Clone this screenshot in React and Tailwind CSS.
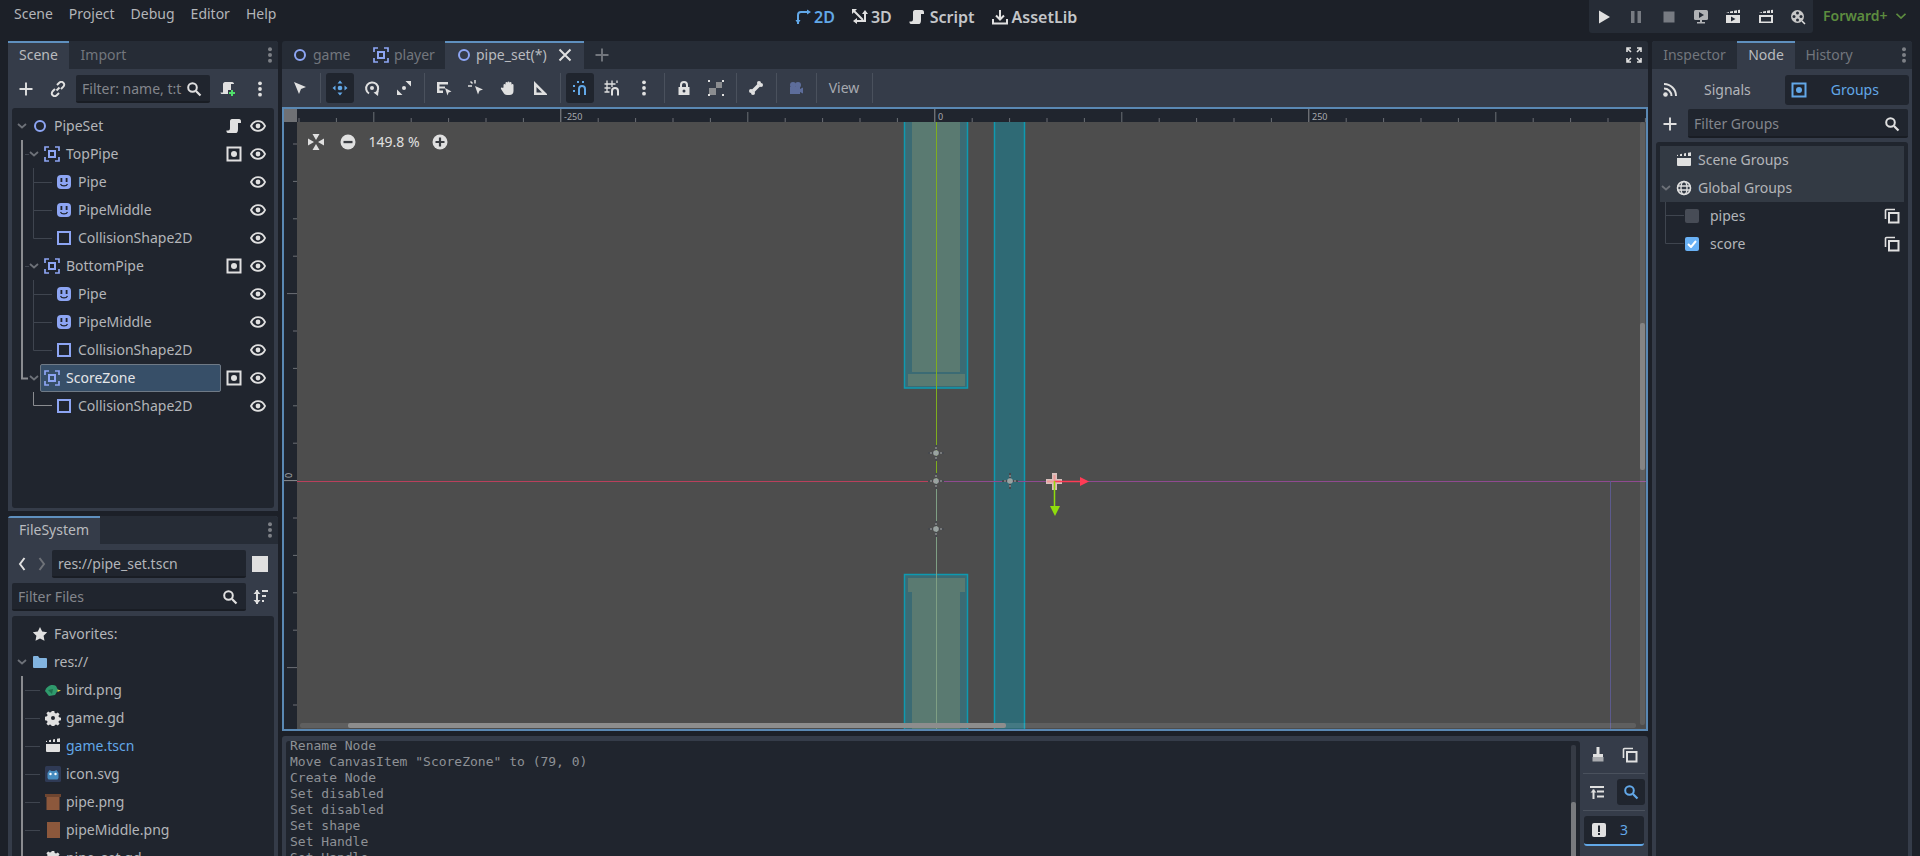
import React from "react";

const W = "#e0e0e0";
const B = "#8da5f3";
const Ic = ({ c = W, s = 16, children, className = "" }) => (
  <svg width={s} height={s} viewBox="0 0 16 16" fill="none" stroke="none" className={"shrink-0 " + className} style={{ color: c }}>{children}</svg>
);
const NodeI = () => <Ic><circle cx="8" cy="8" r="5" stroke={B} strokeWidth="2" /></Ic>;
const Node2 = () => <Ic><path d="M1 5V1h4M11 1h4v4M15 11v4h-4M5 15H1v-4" stroke={B} strokeWidth="1.7" /><rect x="5" y="5" width="6" height="6" stroke={B} strokeWidth="2" /></Ic>;
const Sprite = () => <Ic><path d="M5 1h6a4 4 0 0 1 4 4v6a4 4 0 0 1-4 4H5a4 4 0 0 1-4-4V5a4 4 0 0 1 4-4z" fill={B} /><rect x="4.500" y="4" width="1.800" height="4" fill="#20252e" /><rect x="9.700" y="4" width="1.800" height="4" fill="#20252e" /><path d="M4.500 10c1 2.500 6 2.500 7 0" stroke="#20252e" strokeWidth="1.200" /></Ic>;
const Coll = () => <Ic><rect x="2" y="2" width="12" height="12" stroke={B} strokeWidth="2" /></Ic>;
const Eye = () => <Ic><path d="M1 8c3-6.500 11-6.500 14 0-3 6.500-11 6.500-14 0z" stroke={W} strokeWidth="1.800" /><circle cx="8" cy="8" r="2.400" fill={W} /></Ic>;
const Group = ({ c = W }) => <Ic><rect x="1.500" y="1.500" width="13" height="13" stroke={c} strokeWidth="2" /><circle cx="8" cy="8" r="3" fill={c} /></Ic>;
const ScriptI = ({ c = W }) => <Ic c={c}><path d="M6 1h7c1.500 0 2 1 2 2.500V5h-3v6c0 2-.5 4-2 4H2c-1.200 0-1.600-1-1.600-2.400h1.600C4 12.600 4 11 4 9V3.500C4 2 4.700 1 6 1z" fill={c} /></Ic>;
const Search = ({ c = W }) => <Ic c={c}><circle cx="6.500" cy="6.500" r="4.300" stroke={c} strokeWidth="2" /><path d="M10 10l4.500 4.500" stroke={c} strokeWidth="2.200" /></Ic>;
const Chevron = ({ c = "#6d7178" }) => <svg width="10" height="6" viewBox="0 0 10 6" fill="none" className="shrink-0"><path d="M1 1l4 3.500L9 1" stroke={c} strokeWidth="1.800" /></svg>;
const Plus = ({ c = W }) => <Ic c={c}><path d="M8 1.500v13M1.500 8h13" stroke={c} strokeWidth="1.900" /></Ic>;
const Dots = ({ c = W }) => <svg width="4" height="16" viewBox="0 0 4 16" className="shrink-0"><circle cx="2" cy="2.300" r="1.900" fill={c} /><circle cx="2" cy="8" r="1.900" fill={c} /><circle cx="2" cy="13.700" r="1.900" fill={c} /></svg>;
const DockDots = () => <svg width="4" height="16" viewBox="0 0 4 16" className="shrink-0"><circle cx="2" cy="2.300" r="2" fill="#7d8086" /><circle cx="2" cy="8" r="2" fill="#7d8086" /><circle cx="2" cy="13.700" r="2" fill="#7d8086" /></svg>;
const Clap = ({ c = W }) => <Ic c={c}><path d="M1 6h14v7a1 1 0 0 1-1 1H2a1 1 0 0 1-1-1z" fill={c} /><path d="M1 4V3l1-.3v1.300zM4 4V2.200L6 1.800V4zM8 4V1.400l2-.4v3zM12 4V.8l3-.5V4z" fill={c} /></Ic>;
const Copy = () => <Ic><path d="M1.500 11V2.500a1 1 0 0 1 1-1H11" stroke={W} strokeWidth="1.600" /><rect x="5" y="5" width="9.500" height="9.500" stroke={W} strokeWidth="2" /></Ic>;

const TreeRow = ({ pl, chevron, icon, label, right, selected }) => (
  <div className="relative flex h-7 items-center">
    {selected && <div className="absolute left-7 top-0 h-7 w-[181px] rounded-[2px] border border-[#6f7a86] bg-[#374f68]" />}
    <div className="relative flex items-center" style={{ paddingLeft: pl }}>
      {chevron !== undefined && <span className="mr-[5px] flex w-[10px] justify-center">{chevron && <Chevron />}</span>}
      {icon}
      <span className={"ml-[6px] text-[14px] leading-none " + (selected ? "text-[#e4e6e8]" : "text-[#b3b5b9]")}>{label}</span>
    </div>
    <div className="absolute left-[214px] flex w-[16px] justify-center">{right}</div>
    <div className="absolute left-[238px]"><Eye /></div>
  </div>
);

const Panel = ({ className = "", children }) => <div className={"flex flex-col bg-[#353c49] rounded-t-[3px] " + className}>{children}</div>;
const TabBar = ({ children, className = "" }) => <div className={"flex h-7 shrink-0 items-stretch rounded-t-[3px] bg-[#262c36] text-[14px] leading-none " + className}>{children}</div>;
const Tab = ({ active, children, className = "" }) => (
  <div className={"flex items-center justify-center pb-[2px] " + (active ? "border-t-2 border-[#5f90bf] bg-[#353c49] text-[#b9bbbf] " : "pt-[2px] text-[#72767d] ") + className}>{children}</div>
);
const Input = ({ className = "", text, icon, tc = "text-[#83868c]" }) => (
  <div className={"flex items-center justify-between rounded-[2px] border-b-2 border-[#191d24] bg-[#20252e] pt-[2px] text-[14px] leading-5 " + className}>
    <span className={"whitespace-nowrap " + tc}>{text}</span>{icon}
  </div>
);

const ToolBtn = ({ active, children, w = "w-8" }) => (
  <div className={w + " flex h-full items-center justify-center"}>
    {active ? <div className="flex h-[30px] w-7 items-center justify-center rounded-[3px] bg-[#20252e]">{children}</div> : children}
  </div>
);
const Sep = () => <div className="flex h-full w-2 items-center justify-center"><div className="h-[30px] w-px bg-[#4a515d]" /></div>;

const rulerX = Array.from({ length: 37 }, (_, i) => i);
const Viewport = () => (
  <div className="relative h-[624px] w-full overflow-hidden bg-[#4d4d4d]">
    <svg className="absolute inset-0" width="1366" height="624" viewBox="282 107 1366 624">
      {/* top pipe */}
      <rect x="904.500" y="115" width="63" height="273" fill="#3b6b74" stroke="#0e9ab1" strokeWidth="1.500" />
      <rect x="912" y="122" width="48" height="250" fill="#5a7a71" />
      <rect x="908" y="374" width="57" height="12" fill="#5a7a71" />
      {/* bottom pipe */}
      <rect x="904.500" y="574.500" width="63" height="170" fill="#3b6b74" stroke="#0e9ab1" strokeWidth="1.500" />
      <rect x="912" y="592" width="48" height="150" fill="#5a7a71" />
      <rect x="908" y="578" width="57" height="14" fill="#5a7a71" />
      {/* zone */}
      <rect x="994.500" y="115" width="30" height="630" fill="#2f6a75" stroke="#0e9ab1" strokeWidth="1.500" />

      <path d="M936.500 122V481" stroke="#7fae1e" />
      <path d="M936.500 481V731" stroke="#7f9f84" />
      <path d="M297 481.500H936" stroke="#b9405c" />
      <path d="M936 481.500H1646" stroke="#8f4a90" />
      <path d="M1610.500 481V731" stroke="#5c5a8c" />

      {[[936, 453], [936, 481], [936, 529], [1010, 481]].map(([x, y]) => (
        <g key={x + "-" + y}>
          <path d={`M${x - 8} ${y}h5M${x + 3} ${y}h5M${x} ${y - 8}v5M${x} ${y + 3}v5`} stroke="#45484d" strokeWidth="2" />
          <path d={`M${x - 6} ${y}h2M${x + 4} ${y}h2M${x} ${y - 6}v2M${x} ${y + 4}v2`} stroke="#a8a8a8" strokeWidth="1" />
          <circle cx={x} cy={y} r="2.800" fill="#9aa3a1" />
        </g>
      ))}
      <path d="M1046 481.500h16M1054.500 473v17" stroke="#d9c0bd" strokeWidth="5" />
      <path d="M1047 481.500h14M1054.500 475v13" stroke="#f09a98" strokeWidth="2" />
      <path d="M1054 481.500H1081" stroke="#ff3b55" strokeWidth="1.500" />
      <path d="M1080 477l9 4.500-9 4.500z" fill="#ff3b55" />
      <path d="M1054.500 481V507" stroke="#8fdc0c" strokeWidth="1.500" />
      <path d="M1050 506h10l-5 10z" fill="#8fdc0c" />

      {/* rulers */}
      <rect x="282" y="107" width="1366" height="15" fill="#20252e" />
      <rect x="282" y="107" width="15" height="624" fill="#20252e" />
      <rect x="284" y="109" width="13" height="13" fill="#6f7175" />
      {rulerX.map((i) => {
        const x = 299 + i * 37.4;
        const big = Math.abs((i - 7) % 10) === 0;
        const mid = Math.abs((i - 2) % 5) === 0;
        return <path key={i} d={`M${x} 122V${big ? 109 : mid ? 112 : 118}`} stroke={big ? "#8c8e92" : "#6c6f75"} />;
      })}
      {Array.from({ length: 17 }, (_, i) => {
        const y = 144 + i * 37.4;
        const k = Math.round((481 - y) / 37.4);
        const big = k % 10 === 0;
        const mid = k % 5 === 0;
        return <path key={i} d={`M297 ${y}H${big ? 284 : mid ? 287 : 293}`} stroke={big ? "#8c8e92" : "#6c6f75"} />;
      })}

      {/* scroll bars */}
      <rect x="1640" y="122" width="5" height="603" rx="2" fill="#ffffff" fillOpacity="0.1" />
      <rect x="1640" y="323" width="5" height="147" rx="2" fill="#858585" />
      <rect x="300" y="723" width="1336" height="5" rx="2" fill="#ffffff" fillOpacity="0.1" />
      <rect x="348" y="723" width="658" height="5" rx="2" fill="#8d8d8d" />
    </svg>
    <span className="absolute left-[282px] top-[5px] text-[9px] leading-none text-[#a8aaae]">-250</span>
    <span className="absolute left-[656px] top-[5px] text-[9px] leading-none text-[#a8aaae]">0</span>
    <span className="absolute left-[1030px] top-[5px] text-[9px] leading-none text-[#a8aaae]">250</span>
    <span className="absolute left-[4px] top-[364px] -rotate-90 text-[9px] leading-none text-[#a8aaae]">0</span>

    <div className="absolute left-[26px] top-[27px] flex items-center">
      <Ic><path d="M0 4.500L6 8 0 11.500zM16 4.500L10 8 16 11.500zM4.500 0L8 6 11.500 0zM4.500 16L8 10 11.500 16z" fill={W} /></Ic>
      <span className="ml-4"><Ic><circle cx="8" cy="8" r="7.500" fill={W} /><rect x="3.500" y="6.900" width="9" height="2.300" fill="#3a3d42" /></Ic></span>
      <span className="ml-[12px] w-[52px] text-center text-[14px] leading-none text-[#e0e0e0]">149.8 %</span>
      <span className="ml-[12px]"><Ic><circle cx="8" cy="8" r="7.500" fill={W} /><path d="M3.500 8h9M8 3.500v9" stroke="#3a3d42" strokeWidth="2.200" /></Ic></span>
    </div>
    <div className="pointer-events-none absolute inset-0 border-2 border-[#5a88b3]" />
  </div>
);

const logs = ['Rename Node', 'Move CanvasItem "ScoreZone" to (79, 0)', 'Create Node', 'Set disabled', 'Set disabled', 'Set shape', 'Set Handle', 'Set Handle'];

const Bird = () => <Ic><path d="M0 9c2-6 8-7 11-5l2 4-3 5-6 1z" fill="#2f9a6c" /><path d="M12.500 7.500l3.500 1-3.500 1.500z" fill="#e0d84a" /><path d="M3 8l5-1-1 5z" fill="#1f6f4e" /></Ic>;
const Gear = () => <Ic><path d="M6.700 1h2.600l.4 2 1.400.6 1.700-1.200 1.800 1.800-1.200 1.700.6 1.400 2 .4v2.600l-2 .4-.6 1.400 1.200 1.700-1.800 1.800-1.700-1.200-1.400.6-.4 2H6.700l-.4-2-1.400-.6-1.700 1.200-1.800-1.800 1.200-1.700-.6-1.400-2-.4V6.700l2-.4.6-1.400-1.200-1.700 1.800-1.800 1.700 1.200 1.400-.6z" fill={W} /><circle cx="8" cy="8" r="2" fill="#20252e" /></Ic>;
const Godot = () => <Ic><rect width="16" height="16" rx="1.500" fill="#2f3a55" /><path d="M2.500 7l2-3 2 1h3l2-1 2 3v5l-1 1.500h-9l-1-1.500z" fill="#478cbf" /><circle cx="5.500" cy="8" r="1.200" fill="#fff" /><circle cx="10.500" cy="8" r="1.200" fill="#fff" /></Ic>;
const PipeTop = () => <Ic><rect x="1.500" y="3" width="13" height="13" fill="#8c583c" /><rect y="0" width="16" height="3" fill="#6e4530" /></Ic>;
const PipeMid = () => <Ic><rect x="2" y="0" width="13" height="16" fill="#8c583c" /></Ic>;

const FileRow = ({ icon, label, blue }) => (
  <div className="flex h-7 items-center pl-[33px]">
    {icon}
    <span className={"ml-[5px] text-[14px] leading-none " + (blue ? "text-[#62a8e8]" : "text-[#b3b5b9]")}>{label}</span>
  </div>
);

export default function App() {
  return (
    <div className="flex h-[856px] w-[1920px] flex-col overflow-hidden bg-[#1c2028] font-['Noto_Sans',sans-serif]">
      {/* top bar */}
      <div className="flex h-[41px] shrink-0">
        <div className="flex h-[28px] w-[795px] items-center gap-4 pl-[14px] text-[14px] leading-none text-[#b3b5b9]">
          <span>Scene</span><span>Project</span><span>Debug</span><span>Editor</span><span>Help</span>
        </div>
        <div className="flex h-[34px] w-[794px] items-center text-[16px] font-semibold leading-none text-[#c4c6c9]">
          <Ic c="#62a8e8"><path d="M3 15v-3M3 12V6c0-2 1-3 3-3h7" stroke="#62a8e8" strokeWidth="2" /><path d="M.5 11h5L3 15zM12 .5v5L16 3z" fill="#62a8e8" /></Ic>
          <span className="ml-[3px] text-[#62a8e8]">2D</span>
          <span className="ml-[17px]"><Ic><path d="M2 2l9 9M4 12h9V4" stroke={W} strokeWidth="2" /><path d="M0 0h5L0 5zM1 12l4-3v6zM13 1l-3 4h6z" fill={W} /></Ic></span>
          <span className="ml-[3px]">3D</span>
          <span className="ml-[17px]"><ScriptI /></span>
          <span className="ml-[5px]">Script</span>
          <span className="ml-[17px]"><Ic><path d="M8 1v9M4 6.500L8 10.500l4-4M1 10v4.500h14V10" stroke={W} strokeWidth="2" /></Ic></span>
          <span className="ml-[4px]">AssetLib</span>
        </div>
        <div className="flex h-[33px] w-[224px] items-center justify-between rounded-b-[3px] bg-[#262c36] px-[7px]">
          <Ic><path d="M3 1.500l11 6.500-11 6.500z" fill={W} /></Ic>
          <Ic><rect x="3" y="2" width="3.500" height="12" fill="#777b82" /><rect x="9.500" y="2" width="3.500" height="12" fill="#777b82" /></Ic>
          <Ic><rect x="2.500" y="2.500" width="11" height="11" fill="#777b82" /></Ic>
          <Ic><rect x="1" y="1" width="14" height="10" rx="1.500" fill="#b0b2b5" /><path d="M6 3l5 3-5 3z" fill="#262c36" /><path d="M7 11h2v2h3v1.500H4V13h3z" fill="#b0b2b5" /></Ic>
          <Ic><path d="M1 6h14v8H1zM1 4l3-1v1zM5 4V2.500L8 2v2zM9 4V1.800l3-.5V4zM13 4V1l2-.3V4z" fill={W} /><path d="M6 7.500l4.500 2.500L6 12.500z" fill="#262c36" /></Ic>
          <Ic><path d="M1 6h14v8H1zM1 4l3-1v1zM5 4V2.500L8 2v2zM9 4V1.800l3-.5V4zM13 4V1l2-.3V4z" fill={W} /><rect x="3" y="8" width="10" height="4.500" fill="#262c36" /></Ic>
          <Ic><circle cx="7.500" cy="7.500" r="6.500" fill="#c8c8c8" /><circle cx="7.500" cy="4" r="1.500" fill="#262c36" /><circle cx="4" cy="7.500" r="1.500" fill="#262c36" /><circle cx="11" cy="7.500" r="1.500" fill="#262c36" /><circle cx="7.500" cy="11" r="1.500" fill="#262c36" /><path d="M12 12l3 3" stroke={W} strokeWidth="1.500" /></Ic>
        </div>
        <div className="ml-[10px] flex h-[32px] items-center text-[14px] font-semibold leading-none text-[#5d8c3f]">
          <span>Forward+</span>
          <span className="ml-[8px]"><svg width="10" height="6" viewBox="0 0 10 6" fill="none"><path d="M.5 .8L5 5 9.500 .8" stroke="#5d8c3f" strokeWidth="1.700" /></svg></span>
        </div>
      </div>

      {/* body */}
      <div className="flex h-[815px] gap-1 px-2">
        {/* left dock */}
        <div className="flex w-[270px] flex-col gap-[5px]">
          <Panel className="h-[470px]">
            <TabBar>
              <Tab active className="w-[61px]">Scene</Tab>
              <Tab className="ml-1 w-[61px]">Import</Tab>
              <div className="ml-auto flex items-center pr-[6px]"><DockDots /></div>
            </TabBar>
            <div className="flex h-[39px] items-center">
              <span className="ml-[10px]"><Plus /></span>
              <span className="ml-[16px]"><Ic><path d="M6.500 9.500l3-3M7 4l2-2c1.500-1.500 3-1.500 4.300-.3s1.200 2.800-.2 4.200L11 8M9 12l-2 2c-1.500 1.500-3 1.500-4.300.3S1.500 11.500 2.900 10L5 8" stroke={W} strokeWidth="2" /></Ic></span>
              <Input className="ml-[10px] h-7 w-[134px] pl-[6px] pr-[8px]" text="Filter: name, t:t" icon={<Search />} />
              <span className="ml-[10px]"><Ic><path d="M5 1h7c1.500 0 2 1 2 2H11v6H8v4H2c-1 0-1.500-.6-1.500-1.500H3V3c0-1 1-2 2-2z" fill={W} /><path d="M12 9v6M9 12h6" stroke="#4fe06a" strokeWidth="2" /></Ic></span>
              <span className="ml-[22px]"><Dots /></span>
            </div>
            <div className="relative mx-1 flex-1 rounded-[3px] bg-[#20252e] pt-[4px]">
              <svg className="absolute left-0 top-0" width="60" height="400" viewBox="12 108 60 400">
                <path d="M22 140V378.500H28" stroke="#8a8c90" strokeWidth="2" fill="none" />
                <path d="M25 154.500h4M33.500 168V238.500H52M33.500 182.500H52M33.500 210.500H52M25 266.500h4M33.500 280V350.500H52M33.500 294.500H52M33.500 322.500H52" stroke="#3f454f" fill="none" />
                <path d="M33.500 392V405.500H52" stroke="#8a8c90" fill="none" />
              </svg>
              <TreeRow pl={5} chevron icon={<NodeI />} label="PipeSet" right={<ScriptI />} />
              <TreeRow pl={17} chevron icon={<Node2 />} label="TopPipe" right={<Group />} />
              <TreeRow pl={44} icon={<Sprite />} label="Pipe" />
              <TreeRow pl={44} icon={<Sprite />} label="PipeMiddle" />
              <TreeRow pl={44} icon={<Coll />} label="CollisionShape2D" />
              <TreeRow pl={17} chevron icon={<Node2 />} label="BottomPipe" right={<Group />} />
              <TreeRow pl={44} icon={<Sprite />} label="Pipe" />
              <TreeRow pl={44} icon={<Sprite />} label="PipeMiddle" />
              <TreeRow pl={44} icon={<Coll />} label="CollisionShape2D" />
              <TreeRow pl={17} chevron icon={<Node2 />} label="ScoreZone" right={<Group />} selected />
              <TreeRow pl={44} icon={<Coll />} label="CollisionShape2D" />
            </div>
            <div className="h-[3px]" />
          </Panel>

          <Panel className="flex-1 overflow-hidden">
            <TabBar>
              <Tab active className="w-[92px]">FileSystem</Tab>
              <div className="ml-auto flex items-center pr-[6px]"><DockDots /></div>
            </TabBar>
            <div className="flex h-[39px] shrink-0 items-center">
              <span className="ml-[10px]"><svg width="8" height="14" viewBox="0 0 8 14" fill="none"><path d="M6.500 1L2 7l4.500 6" stroke={W} strokeWidth="2" /></svg></span>
              <span className="ml-[12px]"><svg width="8" height="14" viewBox="0 0 8 14" fill="none"><path d="M1.500 1L6 7l-4.500 6" stroke="#6e7278" strokeWidth="2" /></svg></span>
              <Input className="ml-[6px] h-7 w-[194px] pl-[6px]" text="res://pipe_set.tscn" tc="text-[#b3b5b9]" />
              <div className="ml-[6px] h-4 w-4 bg-[#e0e0e0]" />
            </div>
            <div className="flex h-[28px] shrink-0 items-center">
              <Input className="ml-1 h-7 w-[234px] pl-[6px] pr-[8px]" text="Filter Files" icon={<Search />} />
              <span className="ml-[6px]"><Ic><path d="M5 1v14" stroke={W} strokeWidth="2" /><path d="M1.500 5L5 1l3.500 4zM1.500 11L5 15l3.500-4z" fill={W} /><path d="M10 2h6M10 7h4M10 12h2" stroke={W} strokeWidth="1.800" /></Ic></span>
            </div>
            <div className="relative mx-1 mt-[5px] flex-1 rounded-t-[3px] bg-[#20252e] pt-[4px]">
              <svg className="absolute left-0 top-0" width="40" height="240" viewBox="12 616 40 240">
                <path d="M22 676V856" stroke="#8a8c90" strokeWidth="2" fill="none" />
                <path d="M25 690.500H40M25 718.500H40M25 746.500H40M25 774.500H40M25 802.500H40M25 830.500H40" stroke="#3f454f" fill="none" />
              </svg>
              <div className="flex h-7 items-center pl-[20px]">
                <Ic><path d="M8 1l2.200 4.600 5 .7-3.600 3.500.9 5L8 12.400 3.500 14.800l.9-5L.8 6.300l5-.7z" fill={W} /></Ic>
                <span className="ml-[6px] text-[14px] leading-none text-[#b3b5b9]">Favorites:</span>
              </div>
              <div className="flex h-7 items-center pl-[5px]">
                <span className="mr-[5px] flex w-[10px] justify-center"><Chevron /></span>
                <Ic><path d="M1 3a1 1 0 0 1 1-1h4l1.500 2H14a1 1 0 0 1 1 1v8a1 1 0 0 1-1 1H2a1 1 0 0 1-1-1z" fill="#82b4e0" /></Ic>
                <span className="ml-[6px] text-[14px] leading-none text-[#b3b5b9]">res://</span>
              </div>
              <FileRow icon={<Bird />} label="bird.png" />
              <FileRow icon={<Gear />} label="game.gd" />
              <FileRow icon={<Clap />} label="game.tscn" blue />
              <FileRow icon={<Godot />} label="icon.svg" />
              <FileRow icon={<PipeTop />} label="pipe.png" />
              <FileRow icon={<PipeMid />} label="pipeMiddle.png" />
              <FileRow icon={<Gear />} label="pipe_set.gd" />
            </div>
          </Panel>
        </div>

        {/* center */}
        <div className="flex w-[1366px] flex-col gap-[5px]">
          <div className="flex h-[690px] shrink-0 flex-col">
            <TabBar>
              <Tab className="ml-[9px] w-[74px] justify-start pl-[1px]"><NodeI /><span className="ml-[5px]">game</span></Tab>
              <Tab className="w-[80px] justify-start pl-[8px]"><Node2 /><span className="ml-[5px]">player</span></Tab>
              <Tab active className="w-[139px] justify-start pl-[11px]"><NodeI /><span className="ml-[4px]">pipe_set(*)</span>
                <span className="ml-[10px]"><Ic><path d="M2.500 2.500l11 11M13.500 2.500l-11 11" stroke={W} strokeWidth="2" /></Ic></span>
              </Tab>
              <div className="ml-[10px] flex items-center"><Plus c="#72767d" /></div>
              <div className="ml-auto flex items-center pr-[6px]"><Ic><path d="M1 5V1h4M1 1l4 4M11 1h4v4M15 1l-4 4M1 11v4h4M1 15l4-4M15 11v4h-4M15 15l-4-4" stroke={W} strokeWidth="1.600" /></Ic></div>
            </TabBar>
            <div className="flex h-[38px] shrink-0 items-center bg-[#353c49] pl-[2px]">
              <ToolBtn><Ic><path d="M2 2l12 5-5 2-2 5z" fill={W} /></Ic></ToolBtn>
              <Sep />
              <ToolBtn active><Ic c="#62a8e8"><path d="M8 .5L10.500 3.500h-5zM8 15.500L5.500 12.500h5zM.5 8L3.500 5.500v5zM15.500 8L12.500 10.500v-5z" fill="#62a8e8" /><circle cx="8" cy="8" r="2.300" fill="#62a8e8" /></Ic></ToolBtn>
              <ToolBtn><Ic><path d="M5 13.500A6 6 0 1 1 12 13" stroke={W} strokeWidth="2" /><path d="M9.500 12.500l5-1.500-.5 5z" fill={W} /><circle cx="8" cy="8" r="2" fill={W} /></Ic></ToolBtn>
              <ToolBtn><Ic><path d="M9.500 1H15v5.500zM6.500 15H1V9.500z" fill={W} /><circle cx="8" cy="8" r="2" fill={W} /></Ic></ToolBtn>
              <Sep />
              <ToolBtn><Ic><path d="M1 2h11v2.500H3.500v2H9v2H3.500v2H7V13H1z" fill={W} /><path d="M9 8l6.500 3.500-3 1-1 3z" fill={W} /></Ic></ToolBtn>
              <ToolBtn><Ic><path d="M0 6h4M7 0v3.500M2.500 1.500l2 2" stroke={W} strokeWidth="1.500" /><path d="M7 6l8 3.500-3.500 1.200L10 14.500z" fill={W} /></Ic></ToolBtn>
              <ToolBtn><Ic><path d="M3.500 7.500V5a1 1 0 0 1 2 0V3a1 1 0 0 1 2 0v-.500a1 1 0 0 1 2 0V3a1 1 0 0 1 2 0v2a1 1 0 0 1 2 0v6c0 2.500-1.500 4-4 4H7c-2 0-3-1-4-3L1 9c-.5-1 1-2 1.500-1z" fill={W} /></Ic></ToolBtn>
              <ToolBtn><Ic><path fillRule="evenodd" d="M2 1l13 13v1H2zM4.500 7v5.500H10z" fill={W} /></Ic></ToolBtn>
              <Sep />
              <ToolBtn active><Ic c="#62a8e8"><path d="M1 5h2v2H1zM1 10h2v2H1zM5 1h2v2H5zM10 1h2v2h-2z" fill="#62a8e8" /><path d="M7 15v-6a3 3 0 0 1 6 0v6" stroke="#62a8e8" strokeWidth="2" /></Ic></ToolBtn>
              <ToolBtn><Ic><path d="M.5 4h11M.5 8h6M.5 12h5M3 .5v12M8 .5V7M13 .5V3" stroke={W} strokeWidth="1.300" /><path d="M8 15.500V11a3 3 0 0 1 6 0v4.500" stroke={W} strokeWidth="2" /></Ic></ToolBtn>
              <ToolBtn><Dots /></ToolBtn>
              <Sep />
              <ToolBtn><Ic><path d="M2.500 7H4V5a4 4 0 0 1 8 0v2h1.500v8h-11zM6 7h4V5a2 2 0 0 0-4 0z" fill={W} fillRule="evenodd" /><circle cx="8" cy="11" r="1.500" fill="#353c49" /></Ic></ToolBtn>
              <ToolBtn><Ic><path d="M1 8h7v7H1zM8 2h6v6H8z" fill="#8b8d90" /><path d="M0 0h2v2H0zM14 0h2v2h-2zM0 14h2v2H0zM14 14h2v2h-2z" fill={W} /></Ic></ToolBtn>
              <Sep />
              <ToolBtn><Ic><path d="M5 11l6-6" stroke={W} strokeWidth="3.500" /><circle cx="11" cy="3" r="2" fill={W} /><circle cx="13" cy="5" r="2" fill={W} /><circle cx="3" cy="11" r="2" fill={W} /><circle cx="5" cy="13" r="2" fill={W} /></Ic></ToolBtn>
              <Sep />
              <ToolBtn><Ic><circle cx="5" cy="5" r="3" fill="#5d6d9b" /><circle cx="10" cy="5" r="3" fill="#5d6d9b" /><path d="M2 7h10v7H2zM12 9l3-1.500v6L12 12z" fill="#5d6d9b" /></Ic></ToolBtn>
              <Sep />
              <ToolBtn w="w-[48px]"><span className="text-[14px] leading-none text-[#a7aab0]">View</span></ToolBtn>
              <Sep />
            </div>
            <Viewport />
          </div>
          {/* bottom */}
          <div className="flex flex-1 overflow-hidden rounded-t-[3px] bg-[#353c49] pl-1 pt-[5px]">
            <div className="relative h-full w-[1294px] overflow-hidden rounded-t-[3px] bg-[#20252e] pl-[4px] font-['DejaVu_Sans_Mono',monospace] text-[13px] leading-[16px] text-[#8e9196]">
              <div className="mt-[-3px]">{logs.map((l, i) => <div key={i} className="whitespace-pre">{l}</div>)}</div>
              <div className="absolute right-[4px] top-1 bottom-0 w-[5px] rounded-[2px] bg-[#363b45]" />
              <div className="absolute right-[4px] top-[61px] bottom-0 w-[5px] rounded-t-[2px] bg-[#787a7e]" />
            </div>
            <div className="flex flex-1 flex-col items-center">
              <div className="flex h-[27px] w-[64px] shrink-0 items-center justify-between px-[8px]">
                <Ic><rect x="6.500" y="0" width="3" height="7" fill={W} /><path d="M3 7h10v3H3z" fill={W} /><path d="M2.500 10h11v4.500h-11z" fill="#a9abaf" /></Ic>
                <Copy />
              </div>
              <div className="my-[5px] h-px w-[62px] shrink-0 bg-[#4a515d]" />
              <div className="flex h-[26px] w-[62px] shrink-0 items-center justify-between pl-[6px]">
                <Ic><path d="M1 3h14M8 7.500h7M8 12.500h7" stroke={W} strokeWidth="2" /><path d="M4.500 5.500V15" stroke={W} strokeWidth="2" /><path d="M1.500 8.500L4.500 5.500 7.500 8.500z" fill={W} /></Ic>
                <div className="flex h-[26px] w-7 items-center justify-center rounded-[3px] bg-[#20252e]"><Search c="#62a8e8" /></div>
              </div>
              <div className="my-[5px] h-px w-[62px] shrink-0 bg-[#4a515d]" />
              <div className="flex h-[30px] w-[60px] shrink-0 items-center rounded-[3px] border-b-2 border-[#62a8e8] bg-[#20252e] pl-[7px] text-[14px] leading-none text-[#62a8e8]">
                <Ic><rect x="1" y="1" width="14" height="14" rx="2" fill={W} /><path d="M7 3.500h2V10H7zM7 11h2v2H7z" fill="#20252e" /></Ic>
                <span className="ml-[13px]">3</span>
              </div>
            </div>
          </div>
        </div>

        {/* right dock */}
        <Panel className="w-[260px]">
          <TabBar>
            <Tab className="w-[85px]">Inspector</Tab>
            <Tab active className="w-[58px]">Node</Tab>
            <Tab className="ml-[5px] w-[58px]">History</Tab>
            <div className="ml-auto flex items-center pr-[6px]"><DockDots /></div>
          </TabBar>
          <div className="mt-[6px] flex h-[30px] shrink-0 items-center">
            <span className="ml-[10px]"><Ic><path d="M2 6.500a7.500 7.500 0 0 1 7.500 7.500M2 2a12 12 0 0 1 12 12" stroke={W} strokeWidth="2" /><circle cx="3.500" cy="12.500" r="2.300" fill={W} /></Ic></span>
            <span className="ml-[26px] text-[14px] leading-none text-[#b3b5b9]">Signals</span>
            <div className="ml-[34px] flex h-[30px] w-[124px] items-center rounded-[3px] bg-[#20252e] pl-[6px]">
              <Group c="#62a8e8" />
              <span className="ml-[24px] text-[14px] leading-none text-[#62a8e8]">Groups</span>
            </div>
          </div>
          <div className="mt-[4px] flex h-[29px] shrink-0 items-center">
            <span className="ml-[10px]"><Plus /></span>
            <Input className="ml-[10px] h-[29px] w-[220px] pl-[6px] pr-[8px]" text="Filter Groups" icon={<Search />} />
          </div>
          <div className="relative mx-1 mt-[4px] flex-1 rounded-t-[3px] bg-[#20252e] pt-[4px]">
            <svg className="absolute left-0 top-0" width="40" height="110" viewBox="1656 142 40 110">
              <path d="M1665.500 202V243.500H1684M1665.500 215.500H1684" stroke="#3f454f" fill="none" />
            </svg>
            <div className="mx-1 bg-[#333a44]">
              <div className="flex h-7 items-center pl-[16px]"><Clap /><span className="ml-[6px] text-[14px] leading-none text-[#b3b5b9]">Scene Groups</span></div>
              <div className="flex h-7 items-center pl-[1px]">
                <span className="mr-[5px] flex w-[10px] justify-center"><Chevron /></span>
                <Ic><circle cx="8" cy="8" r="6.500" stroke={W} strokeWidth="1.600" /><ellipse cx="8" cy="8" rx="3" ry="6.500" stroke={W} strokeWidth="1.400" /><path d="M1.500 6h13M1.500 10h13" stroke={W} strokeWidth="1.400" /></Ic>
                <span className="ml-[6px] text-[14px] leading-none text-[#b3b5b9]">Global Groups</span>
              </div>
            </div>
            {[["pipes", false], ["score", true]].map(([n, on]) => (
              <div key={n} className="flex h-7 items-center pl-[29px]">
                <div className={"flex h-[14px] w-[14px] items-center justify-center rounded-[2px] " + (on ? "bg-[#69b1f5]" : "bg-[#474c56]")}>
                  {on && <svg width="10" height="8" viewBox="0 0 10 8" fill="none"><path d="M1 4l3 3 5-6" stroke="#fff" strokeWidth="2" /></svg>}
                </div>
                <span className="ml-[11px] text-[14px] leading-none text-[#b3b5b9]">{n}</span>
                <span className="ml-auto mr-[8px]"><Copy /></span>
              </div>
            ))}
          </div>
        </Panel>
      </div>
    </div>
  );
}
